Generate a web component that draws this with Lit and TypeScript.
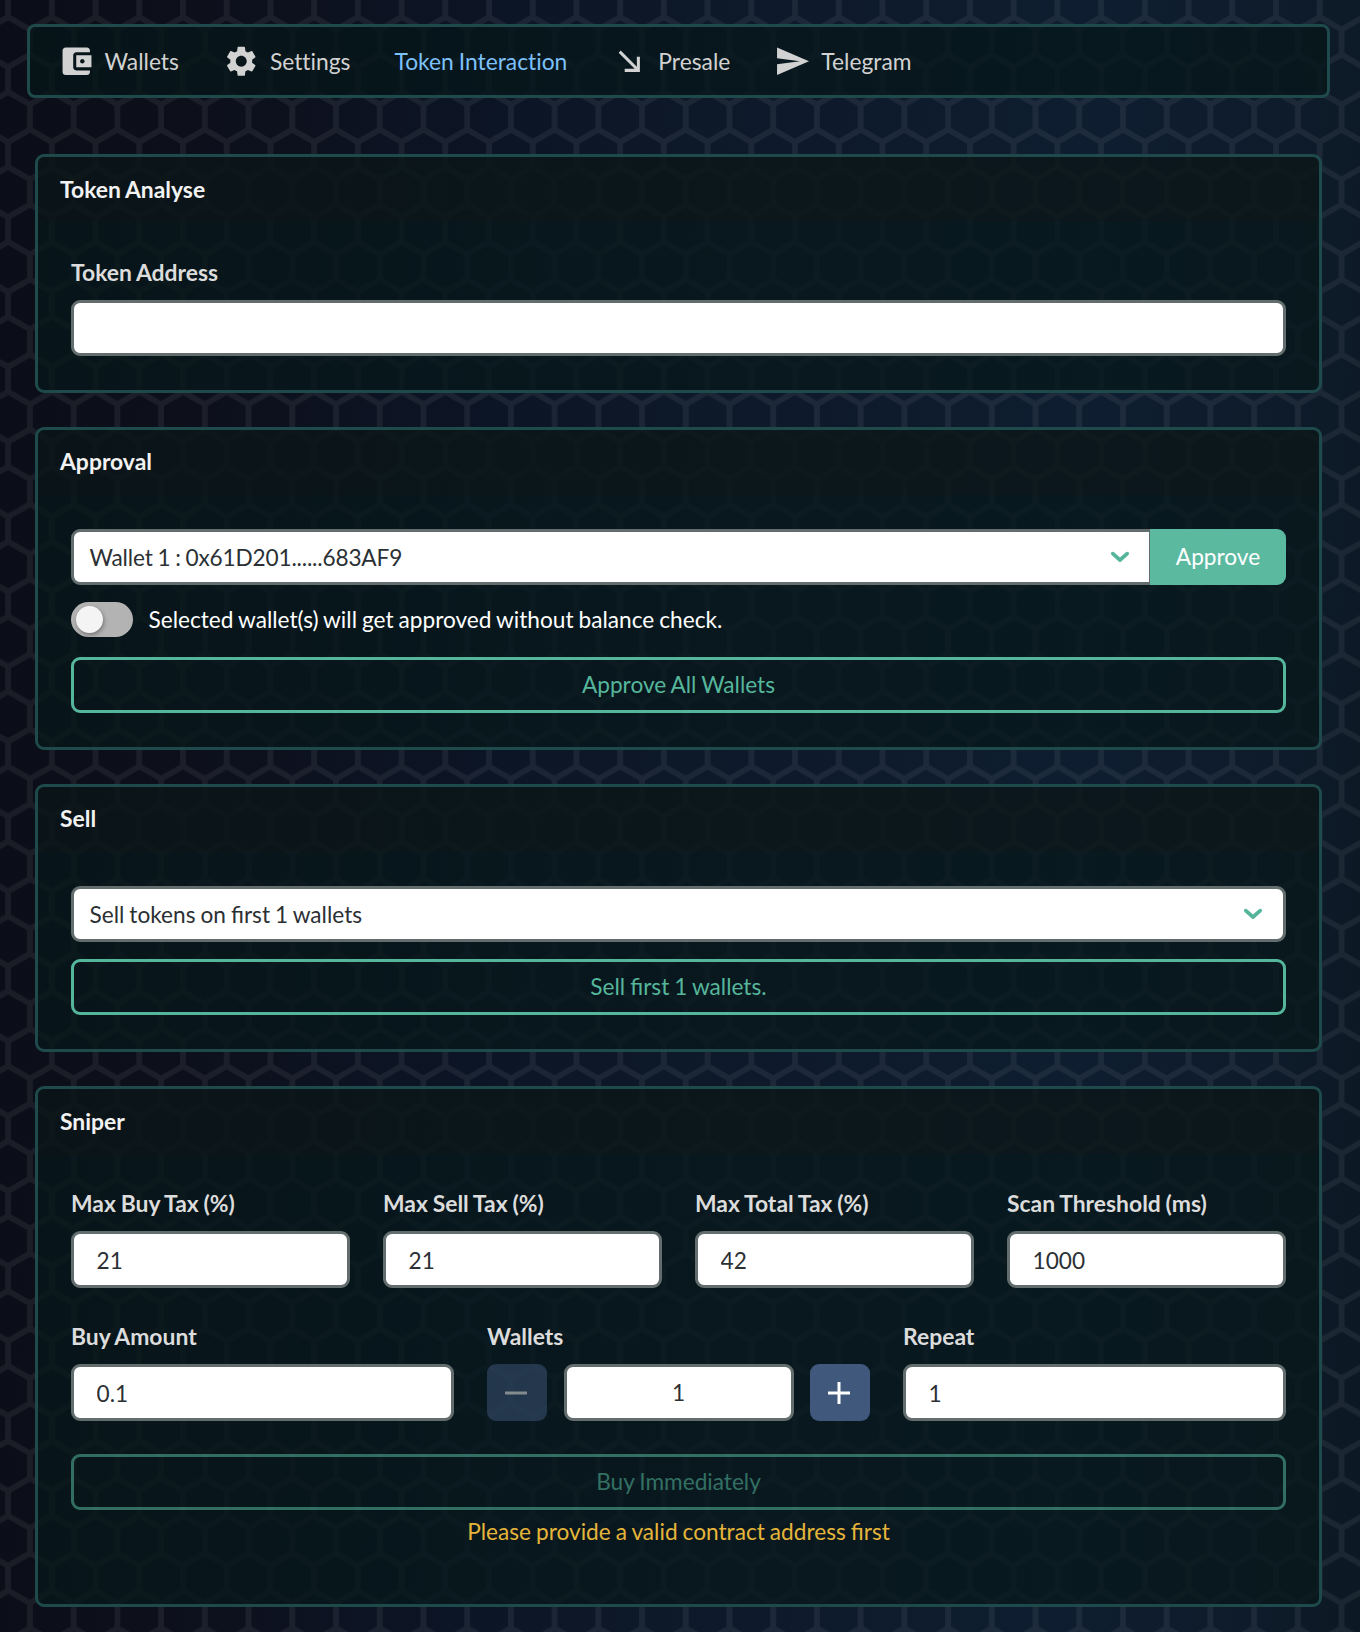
import { LitElement, html, css, svg } from "lit";
import { customElement, state } from "lit/decorators.js";

const ICONS: Record<string, string> = {
  wallet:
    "M21 18v1c0 1.1-.9 2-2 2H5c-1.11 0-2-.9-2-2V5c0-1.1.89-2 2-2h14c1.1 0 2 .9 2 2v1h-9c-1.11 0-2 .9-2 2v8c0 1.1.89 2 2 2h9zm-9-2h10V8H12v8zm4-2.5c-.83 0-1.5-.67-1.5-1.5s.67-1.5 1.5-1.5 1.5.67 1.5 1.5-.67 1.5-1.5 1.5z",
  gear:
    "M19.14 12.94c.04-.3.06-.61.06-.94 0-.32-.02-.64-.07-.94l2.03-1.58c.18-.14.23-.41.12-.61l-1.92-3.32c-.12-.22-.37-.29-.59-.22l-2.39.96c-.5-.38-1.03-.7-1.62-.94l-.36-2.54c-.04-.24-.24-.41-.48-.41h-3.84c-.24 0-.43.17-.47.41l-.36 2.54c-.59.24-1.13.57-1.62.94l-2.39-.96c-.22-.08-.47 0-.59.22L2.74 8.87c-.12.21-.08.47.12.61l2.03 1.58c-.05.3-.09.63-.09.94s.02.64.07.94l-2.03 1.58c-.18.14-.23.41-.12.61l1.92 3.32c.12.22.37.29.59.22l2.39-.96c.5.38 1.03.7 1.62.94l.36 2.54c.05.24.24.41.48.41h3.84c.24 0 .44-.17.47-.41l.36-2.54c.59-.24 1.13-.56 1.62-.94l2.39.96c.22.08.47 0 .59-.22l1.92-3.32c.12-.22.07-.47-.12-.61l-2.01-1.58zM12 15.6c-1.98 0-3.6-1.62-3.6-3.6s1.62-3.6 3.6-3.6 3.6 1.62 3.6 3.6-1.62 3.6-3.6 3.6z",
  arrow: "M5 6.41 6.41 5 17 15.59V9h2v10H9v-2h6.59L5 6.41z",
  send: "M2.01 21L23 12 2.01 3 2 10l15 2-15 2z",
};

@customElement("app-root")
export class AppRoot extends LitElement {
  @state() private wallets = 1;

  static styles = css`
    :host {
      display: block;
      position: relative;
      box-sizing: border-box;
      width: 1360px;
      height: 1632px;
      padding: 24px 30px 0 27px;
      overflow: hidden;
      background: linear-gradient(92deg, #0b0e18 0%, #0d0f1b 14%, #0c1525 36%, #0e1a2b 58%, #0e1d30 78%, #0e1b2a 92%, #0c1823 100%);
      font-family: Lato, sans-serif;
      font-size: 22.65px;
      line-height: 34px;
      word-spacing: -0.8px;
      color: #fff;
    }
    * { box-sizing: border-box; }
    .honeycomb {
      position: absolute;
      inset: 0;
      width: 1360px;
      height: 1632px;
    }
    .page { position: relative; }
    nav {
      display: flex;
      align-items: center;
      height: 74px;
      border: 3px solid #1e4a4b;
      border-radius: 8px;
      background: rgba(5, 23, 25, 0.76);
      background-clip: padding-box;
      padding: 0 27.5px;
      color: #d2d2d2;
      font-size: 22.8px;
      font-variant-ligatures: none;
    }
    .link { display: flex; align-items: center; gap: 10.5px; margin-right: 44px; white-space: nowrap; }
    .link svg { width: 36.5px; height: 36.5px; fill: currentColor; flex: none; }
    .link.active { color: #7dc1fb; }
    main { display: flex; flex-direction: column; gap: 34px; padding: 56px 8px 0; }
    .card {
      border: 3px solid #1e4a4b;
      border-radius: 9px;
      background: rgba(6, 24, 26, 0.76);
      background-clip: padding-box;
      padding-bottom: 34px;
      overflow: hidden;
    }
    .card-title {
      height: 65px;
      padding: 15px 22px 0;
      font-size: 22.9px;
      font-weight: 700;
      word-spacing: -0.8px;
      color: #f2f2f2;
      background: rgba(20, 20, 20, 0.25);
    }
    .card-title.raised { padding-top: 14px; }
    .body { padding: 34px 33px 0; display: flex; flex-direction: column; }
    .body.labelled { padding-top: 33px; }
    .body.sniper { padding-top: 32px; }
    label {
      display: block;
      font-size: 22.9px;
      font-weight: 700;
      word-spacing: -0.8px;
      color: #dcdcdc;
      height: 45px;
    }
    .control {
      display: flex;
      align-items: center;
      width: 100%;
      height: 56px;
      border: 3px solid #646d6d;
      border-radius: 9px;
      background: #fff;
      color: #2b3034;
      font: inherit;
      padding: 1px 22.5px 0;
      outline: none;
    }
    .select { justify-content: space-between; padding: 0 20px 0 15.5px; }
    .select span { padding-top: 2px; }
    .select svg { width: 20px; height: 14px; }
    .address { letter-spacing: -0.17px; }
    .group { display: flex; }
    .group .select { flex: 1; border-radius: 9px 0 0 9px; border-right-width: 1px; padding-right: 19.5px; }
    button {
      font: inherit;
      word-spacing: inherit;
      display: flex;
      align-items: center;
      justify-content: center;
      padding: 0;
    }
    .approve {
      width: 136px;
      height: 56px;
      border: 0;
      border-radius: 0 9px 9px 0;
      background: #5bb9a0;
      color: #fff;
    }
    .outline {
      width: 100%;
      height: 56px;
      border: 3px solid #56b69c;
      border-radius: 9px;
      background: none;
      color: #56b69c;
    }
    .outline[disabled] { opacity: 0.55; }
    .sell { margin-top: 17px; }
    .switch-row { display: flex; align-items: center; gap: 15.5px; height: 35px; margin: 17px 0 20px; }
    .switch { width: 62px; height: 35px; border-radius: 18px; background: #b3b3b3; padding: 4px 5px; }
    .knob { width: 27px; height: 27px; border-radius: 50%; background: #f4f4f4; box-shadow: 1px 2px 4px rgba(0, 0, 0, 0.35); }
    .row { display: grid; gap: 33px; }
    .four { grid-template-columns: repeat(4, 1fr); margin-bottom: 31px; }
    .three { grid-template-columns: repeat(3, 1fr); margin-bottom: 33px; }
    .row .control { height: 57px; }
    .stepper { display: grid; grid-template-columns: 60px 1fr 60px; gap: 16.5px; }
    .stepper .control { text-align: center; padding-top: 0; padding-bottom: 1px; }
    .step { height: 57px; border: 0; border-radius: 9px; background: #40587c; padding: 0 2px 0 0; }
    .step[disabled] { opacity: 0.5; }
    .step svg { width: 22px; height: 22px; }
    .warn { text-align: center; color: #e5b53a; height: 60px; padding-top: 5px; }
  `;

  private icon(name: string) {
    return html`<svg viewBox="0 0 24 24"><path d=${ICONS[name]}></path></svg>`;
  }

  private chevron() {
    return html`<svg viewBox="0 0 20 14"><path d="M2.8 3.6 L10 10 L17.2 3.6" fill="none" stroke="#56b69c" stroke-width="3.7" stroke-linecap="round" stroke-linejoin="round"></path></svg>`;
  }

  private field(label: string, value: string) {
    return html`<div><label>${label}</label><input class="control" .value=${value} /></div>`;
  }

  private honeycomb() {
    return html`<svg class="honeycomb" aria-hidden="true">
      ${svg`<defs><pattern id="hex" patternUnits="userSpaceOnUse" width="43.72" height="74.93" patternTransform="translate(8.1 167)">
        <path d="M0 -25V0L21.86 12.5L43.72 0V-25M21.86 12.5V37.45L0 49.93V74.93L21.86 87.4M21.86 37.45L43.72 49.93V74.93L21.86 87.4" fill="none" stroke="#fff" stroke-width="5.8"></path>
      </pattern></defs>
      <rect width="1360" height="1632" fill="url(#hex)" opacity="0.063"></rect>`}
    </svg>`;
  }

  render() {
    return html`
      ${this.honeycomb()}
      <div class="page">
        <nav>
          <div class="link">${this.icon("wallet")}<span>Wallets</span></div>
          <div class="link">${this.icon("gear")}<span>Settings</span></div>
          <div class="link active"><span>Token Interaction</span></div>
          <div class="link">${this.icon("arrow")}<span>Presale</span></div>
          <div class="link">${this.icon("send")}<span>Telegram</span></div>
        </nav>
        <main>
          <section class="card">
            <div class="card-title">Token Analyse</div>
            <div class="body labelled"><label>Token Address</label><input class="control" /></div>
          </section>
          <section class="card">
            <div class="card-title raised">Approval</div>
            <div class="body">
              <div class="group">
                <div class="control select"><span class="address">Wallet 1 : 0x61D201......683AF9</span>${this.chevron()}</div>
                <button class="approve">Approve</button>
              </div>
              <div class="switch-row">
                <div class="switch"><div class="knob"></div></div>
                <span>Selected wallet(s) will get approved without balance check.</span>
              </div>
              <button class="outline">Approve All Wallets</button>
            </div>
          </section>
          <section class="card">
            <div class="card-title raised">Sell</div>
            <div class="body">
              <div class="control select"><span>Sell tokens on first 1 wallets</span>${this.chevron()}</div>
              <button class="outline sell">Sell first 1 wallets.</button>
            </div>
          </section>
          <section class="card">
            <div class="card-title">Sniper</div>
            <div class="body sniper">
              <div class="row four">
                ${this.field("Max Buy Tax (%)", "21")} ${this.field("Max Sell Tax (%)", "21")}
                ${this.field("Max Total Tax (%)", "42")} ${this.field("Scan Threshold (ms)", "1000")}
              </div>
              <div class="row three">
                ${this.field("Buy Amount", "0.1")}
                <div>
                  <label>Wallets</label>
                  <div class="stepper">
                    <button class="step" ?disabled=${this.wallets <= 1} @click=${() => this.wallets--}>
                      <svg viewBox="0 0 22 22"><path d="M0 11H22" stroke="#fff" stroke-width="3"></path></svg>
                    </button>
                    <input class="control" .value=${String(this.wallets)} />
                    <button class="step" @click=${() => this.wallets++}>
                      <svg viewBox="0 0 22 22"><path d="M0 11H22M11 0V22" stroke="#fff" stroke-width="3"></path></svg>
                    </button>
                  </div>
                </div>
                ${this.field("Repeat", "1")}
              </div>
              <button class="outline" disabled>Buy Immediately</button>
              <div class="warn">Please provide a valid contract address first</div>
            </div>
          </section>
        </main>
      </div>
    `;
  }
}
